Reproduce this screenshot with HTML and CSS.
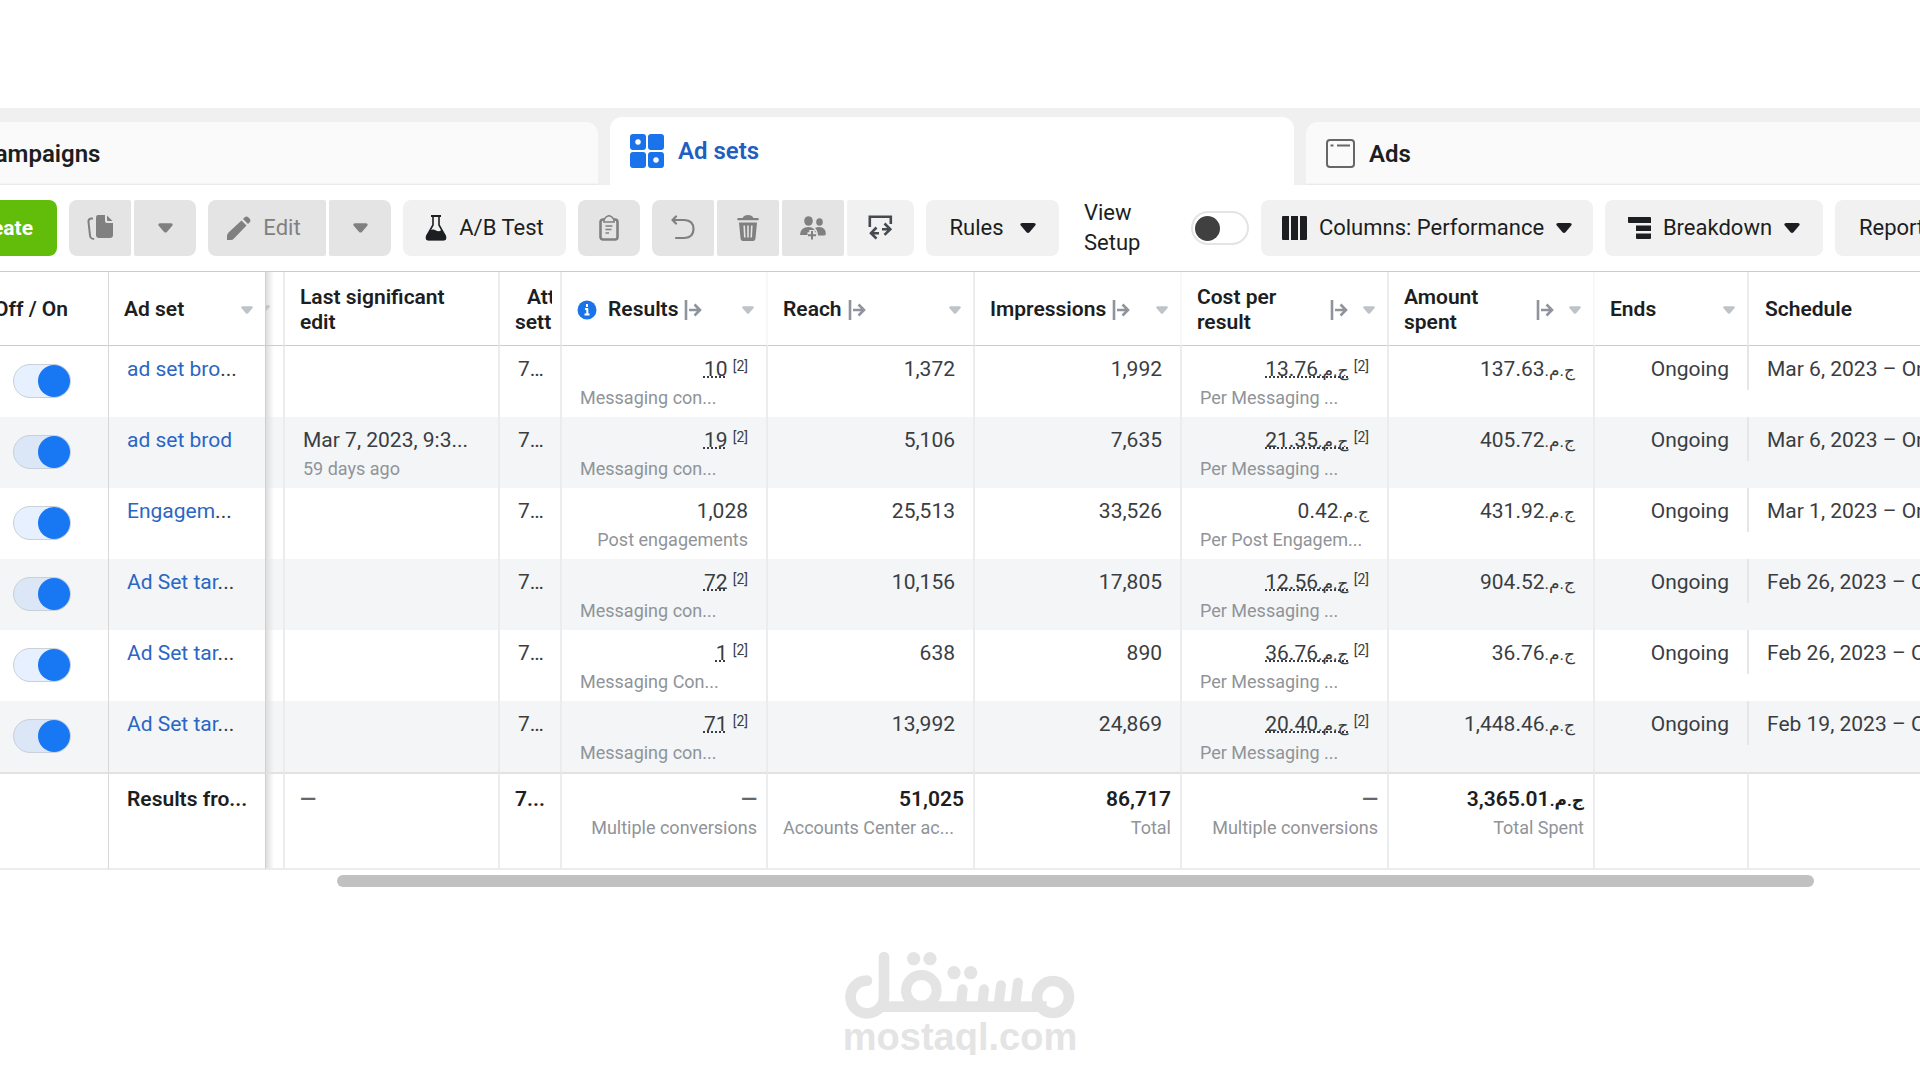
FILE: index.html
```html
<!DOCTYPE html>
<html lang="en">
<head>
<meta charset="utf-8">
<title>Ad sets</title>
<meta name="viewport" content="width=device-width, initial-scale=1">
<link rel="stylesheet" href="styles.css">
</head>
<body>
<svg class="defs" aria-hidden="true">
  <symbol id="caret" viewBox="0 0 16 10"><path d="M2 0h12q2.600 .5 1.200 2.500L9.500 9.200q-1.500 1.400-3 0L.8 2.500Q-.6 .5 2 0z" fill="currentColor"/></symbol>
  <symbol id="move" viewBox="0 0 18 20"><path d="M2 0v20M5 10h10M10.500 4.500 16 10l-5.500 5.500" fill="none" stroke="currentColor" stroke-width="2.600"/></symbol>
</svg>
<nav class="tabs" aria-label="Levels">
  <a class="tab tab-campaigns" href="#campaigns">Campaigns</a>
  <a class="tab tab-active" href="#adsets" aria-current="page">
    <svg width="34" height="34" viewBox="0 0 34 34" aria-hidden="true"><path fill="#1a73ea" fill-rule="evenodd" d="M3 0h10q3 0 3 3v10q0 3-3 3H3q-3 0-3-3V3Q0 0 3 0zM8 5.200a2.800 2.800 0 1 0 .01 0zM21 0h10q3 0 3 3v10q0 3-3 3H21q-3 0-3-3V3q0-3 3-3zM3 18h10q3 0 3 3v10q0 3-3 3H3q-3 0-3-3V21q0-3 3-3zM21 18h10q3 0 3 3v10q0 3-3 3H21q-3 0-3-3V21q0-3 3-3zM26 23.200a2.800 2.800 0 1 0 .01 0z"/></svg>
    Ad sets
  </a>
  <a class="tab" href="#ads">
    <svg width="29" height="29" viewBox="0 0 29 29" aria-hidden="true" fill="none" stroke="#65676b"><rect x="1" y="1" width="27" height="27" rx="3" stroke-width="2"/><path d="M4.500 6.500h3M11 6.500h13" stroke-width="2"/></svg>
    Ads
  </a>
</nav>

<div class="toolbar" role="toolbar" aria-label="Ad set actions">
  <button class="btn create">Create</button>
  <div class="group">
    <button class="btn off icon" aria-label="Duplicate"><svg width="27" height="26" viewBox="0 0 27 26"><path d="M11 0h7v6q0 2 2 2h6v12q0 3-3 3H12q-3 0-3-3V3q0-3 2-3zM20 .5l5.500 5.500H21q-1 0-1-1z" fill="currentColor"/><path d="M6 3.500H4Q1.200 4 1.500 7l1.500 13.500q.4 3.500 4.200 3.500" fill="none" stroke="currentColor" stroke-width="2"/></svg></button>
    <button class="btn off icon" aria-label="Duplicate options"><svg width="15" height="10"><use href="#caret"/></svg></button>
  </div>
  <div class="group">
    <button class="btn off edit"><svg width="24" height="24" viewBox="0 0 24 24"><path d="M0 24v-4Q0 18 1.500 16.500L14.500 4.500 19.500 9.500 7 22.500Q5.500 24 4 24zM16 3l1.700-1.700q1.800-1.500 3.600 0l1.400 1.400q1.500 1.800 0 3.600L21 8z" fill="currentColor"/></svg>Edit</button>
    <button class="btn off icon" aria-label="Edit options"><svg width="15" height="10"><use href="#caret"/></svg></button>
  </div>
  <button class="btn abtest"><svg width="22" height="26" viewBox="0 0 22 26"><path d="M6 1h10" stroke="currentColor" stroke-width="2"/><path d="M8 1v9L2 20.500Q.5 24.500 3.500 24.500h15q3 0 1.500-4L14 10V1" fill="none" stroke="currentColor" stroke-width="1.600"/><path d="M5 15.500q3-2 6 0t5.500-.8L21 21q1 4.500-2.500 4.500h-15Q0 25.500 1 21z" fill="currentColor"/></svg>A/B Test</button>
  <button class="btn off icon" aria-label="Paste"><svg width="20" height="26" viewBox="0 0 20 26" fill="none" stroke="currentColor"><rect x="1.500" y="4.500" width="17" height="20" rx="2.500" stroke-width="2.600"/><path d="M5 4.500Q10-3 15 4.500V7H5z" fill="#e4e4e4" stroke-width="1.600"/><path d="M6.500 11h7M6.500 14.500h6M6.500 18h3.500" stroke-width="1.600"/></svg></button>
  <div class="group">
    <button class="btn off icon" aria-label="Undo"><svg width="24" height="26" viewBox="0 0 24 26" fill="none" stroke="currentColor" stroke-width="2.200" stroke-linecap="round" stroke-linejoin="round"><path d="M5 1.500 1.500 5 5 8.500M2 5h11.500Q22.500 5.500 22.500 14t-9 9H5"/></svg></button>
    <button class="btn off icon" aria-label="Delete"><svg width="22" height="26" viewBox="0 0 22 26"><path d="M1 3h4.500Q7 0 11 0t5.500 3H21q.8 0 .8 1.200T21 5.200H1Q.2 5.200 .2 4.200T1 3zM2 7.500h18l-1.500 15.700q-.3 2.800-3 2.800H6.500q-2.700 0-3-2.800z" fill="currentColor"/><path d="M7.200 10.500l.6 12M11 10.500v12M14.800 10.500l-.6 12" stroke="#e4e4e4" stroke-width="1.600"/></svg></button>
    <button class="btn off icon" aria-label="Audience"><svg width="26" height="24" viewBox="0 0 26 24"><g fill="currentColor"><ellipse cx="8.500" cy="5" rx="4.300" ry="4.800"/><ellipse cx="19.500" cy="6" rx="3.300" ry="3.800"/><path d="M0 18.500Q.5 11 8.500 11q7 0 8 8H.8Q0 19 0 18.500zM15 12q2-1 4.500-1 5.800 0 6.300 6.500 0 2-1.500 2H18Q18 15 15 12z"/></g><path d="M12 14v9.500M7.500 19h9" stroke="#e4e4e4" stroke-width="5.500"/><path d="M12 15v8.500M8 19.200h8" stroke="currentColor" stroke-width="2"/></svg></button>
    <button class="btn icon wide" aria-label="Export and import"><svg width="25" height="26" viewBox="0 0 25 26" fill="none" stroke="#454950" stroke-width="2.600"><path d="M1.800 12V1.800h21V9"/><path d="M8.500 12.500 3 18.200l5.500 5.500M3.500 18.200H11M16.500 8.500l5.800 5.700-5.800 5.700M14 14.200h7.500" /></svg></button>
  </div>
  <button class="btn rules">Rules<svg width="16" height="10"><use href="#caret"/></svg></button>
  <label class="view-setup"><span>View Setup</span><input class="switch plain" type="checkbox"></label>
  <button class="btn columns"><svg width="25" height="24" viewBox="0 0 25 24"><path d="M0 1q0-1 1-1h6v24H1q-1 0-1-1zM9 0h7v24H9zM18 0h6q1 0 1 1v22q0 1-1 1h-6z" fill="currentColor"/></svg>Columns: Performance<svg width="16" height="10"><use href="#caret"/></svg></button>
  <button class="btn breakdown"><svg width="23" height="22" viewBox="0 0 23 22"><path d="M0 0h22q1 0 1 1v5H1Q0 6 0 5zM8 8.500h15v5.500H8zM8 16.500h15V21q0 1-1 1H9q-1 0-1-1z" fill="currentColor"/></svg>Breakdown<svg width="16" height="10"><use href="#caret"/></svg></button>
  <button class="btn reports">Reports<svg width="16" height="10"><use href="#caret"/></svg></button>
</div>

<div class="table-wrap">
<table>
  <colgroup><col class="c-toggle"><col class="c-name"><col class="c-sliver"><col class="c-edit"><col class="c-attr"><col class="c-num"><col class="c-wide"><col class="c-wide"><col class="c-wide"><col class="c-num"><col class="c-ends"><col></colgroup>
  <thead>
    <tr>
      <th class="toggle" scope="col">Off / On</th>
      <th class="name" scope="col"><div class="head">Ad set<svg class="sort" width="12" height="8"><use href="#caret"/></svg></div></th>
      <th class="sliver" aria-hidden="true"><svg width="12" height="8"><use href="#caret"/></svg></th>
      <th scope="col">Last significant<br>edit</th>
      <th class="attr" scope="col"><div>Att<br>sett</div></th>
      <th scope="col" class="soft"><div class="head"><svg class="info" width="20" height="20" viewBox="0 0 20 20"><circle cx="10" cy="10" r="9.500" fill="#1a73ea"/><path d="M10 4v3M8 9h2.300v5.500M7.500 14.500h5" stroke="#fff" stroke-width="2" fill="none"/></svg>Results<svg class="move" width="18" height="20"><use href="#move"/></svg><svg class="sort" width="12" height="8"><use href="#caret"/></svg></div></th>
      <th scope="col"><div class="head">Reach<svg class="move" width="18" height="20"><use href="#move"/></svg><svg class="sort" width="12" height="8"><use href="#caret"/></svg></div></th>
      <th scope="col" class="soft"><div class="head">Impressions<svg class="move" width="18" height="20"><use href="#move"/></svg><svg class="sort" width="12" height="8"><use href="#caret"/></svg></div></th>
      <th scope="col"><div class="head two"><span>Cost per<br>result</span><svg class="move" width="18" height="20"><use href="#move"/></svg><svg class="sort" width="12" height="8"><use href="#caret"/></svg></div></th>
      <th scope="col" class="soft"><div class="head two"><span>Amount<br>spent</span><svg class="move" width="18" height="20"><use href="#move"/></svg><svg class="sort" width="12" height="8"><use href="#caret"/></svg></div></th>
      <th scope="col"><div class="head">Ends<svg class="sort" width="12" height="8"><use href="#caret"/></svg></div></th>
      <th scope="col" class="last">Schedule</th>
    </tr>
  </thead>
  <tbody>
    <tr>
      <td class="toggle"><input class="switch" type="checkbox" checked aria-label="ad set bro"></td>
      <td class="name"><a href="#1">ad set bro</a>...</td><td class="sliver"></td><td></td><td class="attr">7…</td>
      <td class="num"><bdi class="dots">10</bdi> <sup>[2]</sup><small class="cut">Messaging con...</small></td>
      <td class="num">1,372</td><td class="num">1,992</td>
      <td class="num"><bdi class="dots" dir="ltr"><span class="egp">ج.م.&rlm;</span>13.76</bdi> <sup>[2]</sup><small class="cut">Per Messaging ...</small></td>
      <td class="num"><span class="egp">ج.م.&rlm;</span>137.63</td><td class="num ends">Ongoing</td><td class="last">Mar 6, 2023 – Ongoing</td>
    </tr>
    <tr>
      <td class="toggle"><input class="switch" type="checkbox" checked aria-label="ad set brod"></td>
      <td class="name"><a href="#2">ad set brod</a></td><td class="sliver"></td><td>Mar 7, 2023, 9:3...<small>59 days ago</small></td><td class="attr">7…</td>
      <td class="num"><bdi class="dots">19</bdi> <sup>[2]</sup><small class="cut">Messaging con...</small></td>
      <td class="num">5,106</td><td class="num">7,635</td>
      <td class="num"><bdi class="dots" dir="ltr"><span class="egp">ج.م.&rlm;</span>21.35</bdi> <sup>[2]</sup><small class="cut">Per Messaging ...</small></td>
      <td class="num"><span class="egp">ج.م.&rlm;</span>405.72</td><td class="num ends">Ongoing</td><td class="last">Mar 6, 2023 – Ongoing</td>
    </tr>
    <tr>
      <td class="toggle"><input class="switch" type="checkbox" checked aria-label="Engagem"></td>
      <td class="name"><a href="#3">Engagem</a>...</td><td class="sliver"></td><td></td><td class="attr">7…</td>
      <td class="num">1,028<small>Post engagements</small></td>
      <td class="num">25,513</td><td class="num">33,526</td>
      <td class="num"><span class="egp">ج.م.&rlm;</span>0.42<small class="cut">Per Post Engagem...</small></td>
      <td class="num"><span class="egp">ج.م.&rlm;</span>431.92</td><td class="num ends">Ongoing</td><td class="last">Mar 1, 2023 – Ongoing</td>
    </tr>
    <tr>
      <td class="toggle"><input class="switch" type="checkbox" checked aria-label="Ad Set tar"></td>
      <td class="name"><a href="#4">Ad Set tar</a>...</td><td class="sliver"></td><td></td><td class="attr">7…</td>
      <td class="num"><bdi class="dots">72</bdi> <sup>[2]</sup><small class="cut">Messaging con...</small></td>
      <td class="num">10,156</td><td class="num">17,805</td>
      <td class="num"><bdi class="dots" dir="ltr"><span class="egp">ج.م.&rlm;</span>12.56</bdi> <sup>[2]</sup><small class="cut">Per Messaging ...</small></td>
      <td class="num"><span class="egp">ج.م.&rlm;</span>904.52</td><td class="num ends">Ongoing</td><td class="last">Feb 26, 2023 – Ongoing</td>
    </tr>
    <tr>
      <td class="toggle"><input class="switch" type="checkbox" checked aria-label="Ad Set tar"></td>
      <td class="name"><a href="#5">Ad Set tar</a>...</td><td class="sliver"></td><td></td><td class="attr">7…</td>
      <td class="num"><bdi class="dots">1</bdi> <sup>[2]</sup><small class="cut">Messaging Con...</small></td>
      <td class="num">638</td><td class="num">890</td>
      <td class="num"><bdi class="dots" dir="ltr"><span class="egp">ج.م.&rlm;</span>36.76</bdi> <sup>[2]</sup><small class="cut">Per Messaging ...</small></td>
      <td class="num"><span class="egp">ج.م.&rlm;</span>36.76</td><td class="num ends">Ongoing</td><td class="last">Feb 26, 2023 – Ongoing</td>
    </tr>
    <tr>
      <td class="toggle"><input class="switch" type="checkbox" checked aria-label="Ad Set tar"></td>
      <td class="name"><a href="#6">Ad Set tar</a>...</td><td class="sliver"></td><td></td><td class="attr">7…</td>
      <td class="num"><bdi class="dots">71</bdi> <sup>[2]</sup><small class="cut">Messaging con...</small></td>
      <td class="num">13,992</td><td class="num">24,869</td>
      <td class="num"><bdi class="dots" dir="ltr"><span class="egp">ج.م.&rlm;</span>20.40</bdi> <sup>[2]</sup><small class="cut">Per Messaging ...</small></td>
      <td class="num"><span class="egp">ج.م.&rlm;</span>1,448.46</td><td class="num ends">Ongoing</td><td class="last">Feb 19, 2023 – Ongoing</td>
    </tr>
  </tbody>
  <tfoot>
    <tr>
      <td class="toggle"></td><td class="name">Results fro...</td><td class="sliver"></td><td class="first-total"><span class="dash">—</span></td><td class="attr">7...</td>
      <td class="num"><span class="dash">—</span><small>Multiple conversions</small></td>
      <td class="num">51,025<small class="cut">Accounts Center ac...</small></td>
      <td class="num">86,717<small>Total</small></td>
      <td class="num"><span class="dash">—</span><small>Multiple conversions</small></td>
      <td class="num"><span class="egp">ج.م.&rlm;</span>3,365.01<small>Total Spent</small></td>
      <td class="num"></td><td class="last"></td>
    </tr>
  </tfoot>
</table>
<div class="scroll"><div class="thumb"></div></div>
</div>

<footer class="brand">
  <svg width="230" height="68" viewBox="75 65 690 204" fill="none" stroke="currentColor" stroke-width="32" stroke-linecap="round" role="img" aria-label="مستقل">
    <path d="M141 154A49 49 0 0 0 140 252A52 49 0 0 0 192 203V83"/>
    <path d="M175 232H680" stroke-linecap="butt"/>
    <circle cx="304" cy="183" r="46" stroke-width="30"/>
    <circle cx="699" cy="203" r="48"/>
    <path d="M428 180l-5 45M492 180l-5 45M543 168l-7 57M594 160l-8 65" stroke-width="30"/>
    <g fill="currentColor" stroke="none"><circle cx="281" cy="88" r="20"/><circle cx="330" cy="88" r="20"/><circle cx="402" cy="130" r="20"/><circle cx="452" cy="130" r="20"/></g>
  </svg>
  <span>mostaql.com</span>
</footer>
</body>
</html>
```
FILE: styles.css
```css
* { box-sizing: border-box; }

body {
  margin: 0;
  padding-top: 108px;
  overflow-x: hidden;
  background: #fff;
  color: #1c1e21;
  font: 400 21px/30px Roboto, "DejaVu Sans", sans-serif;
}

.defs { position: absolute; width: 0; height: 0; }

/* The three level tabs run past both sides of the window */
.tabs {
  display: grid;
  grid-template-columns: repeat(3, 1fr);
  align-items: end;
  gap: 12px;
  height: 77px;
  margin: 0 -70px 0 -86px;
  background: #f0f0f0;
}
.tab {
  display: flex;
  align-items: center;
  gap: 14px;
  height: 63px;
  padding: 0 20px;
  border-radius: 12px 12px 0 0;
  background: #fafafa;
  box-shadow: inset 0 -3px 2px -2px #e4e4e4;
  color: #1c1e21;
  font-size: 24px;
  font-weight: 600;
  text-decoration: none;
}
.tab-campaigns { padding-left: 65px; }
.tab-active {
  height: 68px;
  background: #fff;
  box-shadow: none;
  color: #1f5fc4;
}

.toolbar {
  display: flex;
  align-items: center;
  gap: 12px;
  height: 86px;
  overflow: hidden;
  font-size: 22px;
}
.btn {
  display: flex;
  flex: none;
  align-items: center;
  justify-content: center;
  height: 56px;
  padding: 0 20px;
  border: 0;
  border-radius: 8px;
  background: #f1f1f1;
  color: #1c1e21;
  font: inherit;
  white-space: nowrap;
}
.btn.off { background: #e4e4e4; color: #808080; }
.btn.icon { width: 62px; padding: 0; }
.btn.wide { width: 67px; }
.btn.create {
  justify-content: flex-end;
  width: 120px;
  margin-left: -63px;
  padding-right: 24px;
  background: #62bd0b;
  color: #fff;
  font-size: 21px;
  font-weight: 700;
}
.group { display: flex; flex: none; gap: 3px; }
.group .btn { border-radius: 2px; }
.group .btn:first-child { border-radius: 8px 2px 2px 8px; }
.group .btn:last-child { border-radius: 2px 8px 8px 2px; }
.btn.edit { width: 118px; padding: 0 24px 0 18px; gap: 12px; }
.abtest { width: 163px; gap: 12px; }
.rules { width: 133px; gap: 16px; }
.columns { width: 332px; gap: 12px; }
.breakdown { width: 218px; gap: 12px; }
.btn.reports { padding: 0 24px; gap: 16px; }

.view-setup {
  display: flex;
  flex: none;
  align-items: center;
  justify-content: space-between;
  width: 178px;
  padding-left: 13px;
}
.view-setup span { width: 70px; }

.switch {
  display: block;
  appearance: none;
  width: 58px;
  height: 34px;
  margin: 0;
  border: 1px solid #c9d0d8;
  border-radius: 17px;
  background: rgba(24, 119, 242, .11);
}
.switch::before {
  content: "";
  display: block;
  width: 32px;
  height: 32px;
  margin-left: auto;
  border-radius: 50%;
  background: #1877f2;
}
.switch.plain { padding: 3px 2px; border: 2px solid #e4e4e4; background: #fff; }
.switch.plain::before { width: 25px; height: 25px; margin: 0; background: #404040; }

.table-wrap { overflow: hidden; border-top: 1px solid #ccc; }
table {
  width: 100%;
  border-collapse: separate;
  border-spacing: 0;
  table-layout: fixed;
}
.c-toggle { width: 109px; }
.c-name { width: 157px; }
.c-sliver { width: 19px; }
.c-edit { width: 215px; }
.c-attr { width: 62px; }
.c-num { width: 206px; }
.c-wide { width: 207px; }
.c-ends { width: 154px; }

th, td {
  overflow: hidden;
  border-right: 2px solid #eaecee;
  text-align: left;
  white-space: nowrap;
}
th {
  height: 74px;
  padding: 2px 12px 0 15px;
  border-bottom: 1px solid #ccc;
  font-weight: 600;
  line-height: 25px;
}
th.soft { border-right-color: #f8f8f8; }
.head { display: flex; align-items: center; }
.head .move { flex: none; margin-left: 6px; color: #8f939b; }
.head .sort { flex: none; margin-left: auto; color: #bec3c9; }
.head .info { margin-right: 11px; }
.head.two span { flex: 1; }
.head.two .sort { margin-left: 15px; }

td {
  height: 71px;
  padding: 8px 18px 5px;
  vertical-align: top;
  color: #3a3d42;
}
tbody tr:nth-child(even) td { background-color: #f3f5f7; }
small { display: block; color: #909498; font-size: 18px; line-height: 28px; }
.num { text-align: right; }
.num .cut { text-align: left; }
sup { font-size: 14px; line-height: 0; vertical-align: 5px; }
.dots { text-decoration: underline dotted 2px; text-decoration-skip-ink: none; text-underline-offset: 0; }
.egp { font-size: 17px; line-height: 0; }
td a { color: #2a66c4; text-decoration: none; }

.toggle { border-right: 1px solid #d8d8d8; }
th.toggle { padding: 2px 0 0; text-indent: -6px; }
td.toggle { padding: 18px 13px; }
.name { border-right: 1px solid #d0d0d0; }
td.name { padding-right: 0; }
.sliver { padding: 0; background-image: linear-gradient(to right, #dedede, #fff0 8px); }
th.sliver { color: #bec3c9; }
th.sliver svg { display: block; margin-left: -8px; }
td.attr { padding-right: 0; }
th.attr { padding: 2px 8px 0 15px; }
th.attr div { overflow: hidden; text-indent: 12px; }
.last, td.last { border-right: 0; }

/* The divider before the schedule stops short of the row's foot */
td.ends {
  border-right: 0;
  padding-right: 20px;
  background: linear-gradient(#e4e6e8, #e4e6e8) no-repeat 100% 0 / 2px 44px;
}
.last { padding-left: 16px; }
tbody .last { padding-left: 18px; }

tfoot td {
  height: 98px;
  padding-top: 10px;
  border-top: 2px solid #e2e2e2;
  border-bottom: 2px solid #ececec;
  color: #1c1e21;
  font-weight: 600;
}
tfoot .attr, tfoot .first-total { padding-left: 15px; }
tfoot .num { padding-right: 9px; padding-left: 15px; }
tfoot small { font-weight: 400; }
.dash { color: #65676b; font-weight: 700; }

.scroll { padding: 5px 106px 0 337px; }
.thumb { height: 12px; border-radius: 6px; background: #c1c1c1; }

.brand {
  display: flex;
  flex-direction: column;
  align-items: center;
  padding-top: 64px;
  color: #e4e4e4;
  font: 700 38px/36px "Liberation Sans", Arial, sans-serif;
}
```
